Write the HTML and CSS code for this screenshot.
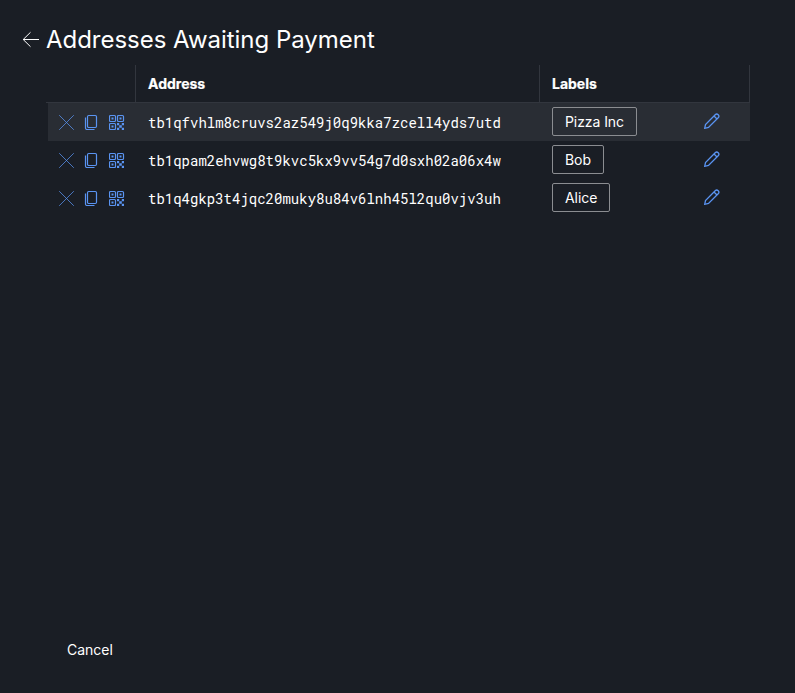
FILE: index.html
```html
<!DOCTYPE html>
<html lang="en"><head><meta charset="utf-8"><title>Addresses Awaiting Payment</title><link rel="stylesheet" href="styles.css"></head>
<body>
<svg class="defs" width="0" height="0">
<symbol id="x" viewBox="0 0 16 16"><path d="M.2 1.200l14.600 14.600M14.800 1.200L.2 15.800"/></symbol>
<symbol id="copy" viewBox="0 0 16 16"><rect x="3.500" y="1.500" width="9" height="12" rx="1.200"/><path d="M1.500 3.500v10.500a1.500 1.500 0 0 0 1.500 1.500h7.500"/></symbol>
<symbol id="qr" viewBox="0 0 16 16"><rect x=".5" y="1.500" width="6" height="6" rx="1"/><rect x="8.500" y="1.500" width="6" height="6" rx="1"/><rect x=".5" y="9.500" width="6" height="6" rx="1"/><path class="fill" d="M2.500 3.500h2v2h-2zM10.500 3.500h2v2h-2zM2.500 11.500h2v2h-2zM8 9h2.200v2.200H8zM12.800 9H15v2.200h-2.200zM10.200 11.200h2.600v2.600h-2.600zM8 13.800h2.200V16H8zM12.800 13.800H15V16h-2.200z"/></symbol>
<symbol id="pen" viewBox="0 0 16 16"><path d="M.7 15.300l.8-3.800L11.200 1.800a2 2 0 0 1 3 3L4.500 14.500zM10 3l3 3"/></symbol>
</svg>
<header class="title"><svg class="back" viewBox="0 0 18 18"><path d="M17 8.500H1.200M8.500 1.300L1.200 8.500l7.300 7.200"/></svg><h1>Addresses Awaiting Payment</h1></header>
<main class="table">
<div class="row head"><div class="cell"></div><div class="cell">Address</div><div class="cell">Labels</div></div>
<div class="row selected"><div class="actions"><svg class="thin"><use href="#x"/></svg><svg><use href="#copy"/></svg><svg><use href="#qr"/></svg></div><div class="address">tb1qfvhlm8cruvs2az549j0q9kka7zcell4yds7utd</div><div class="labels"><span class="tag">Pizza Inc</span><svg class="edit"><use href="#pen"/></svg></div></div>
<div class="row"><div class="actions"><svg class="thin"><use href="#x"/></svg><svg><use href="#copy"/></svg><svg><use href="#qr"/></svg></div><div class="address">tb1qpam2ehvwg8t9kvc5kx9vv54g7d0sxh02a06x4w</div><div class="labels"><span class="tag">Bob</span><svg class="edit"><use href="#pen"/></svg></div></div>
<div class="row"><div class="actions"><svg class="thin"><use href="#x"/></svg><svg><use href="#copy"/></svg><svg><use href="#qr"/></svg></div><div class="address">tb1q4gkp3t4jqc20muky8u84v6lnh45l2qu0vjv3uh</div><div class="labels"><span class="tag">Alice</span><svg class="edit"><use href="#pen"/></svg></div></div>
</main>
<footer><button class="cancel">Cancel</button></footer>
</body></html>
```

FILE: styles.css
```css
*{box-sizing:border-box}
body{margin:0;height:693px;background:#1a1e25;color:#fff;font:14px Inter,sans-serif;display:flex;flex-direction:column}
.defs{display:none}
svg{width:16px;height:16px;fill:none;stroke:#5a94f2;stroke-width:1.2}
.fill{fill:#5a94f2;stroke:none}
.thin{stroke-width:.75}
.edit{stroke-width:1.3}
.title{display:flex;align-items:center;height:65px;padding:14px 0 0 22px;gap:6px}
.title .back{width:18px;height:18px;stroke:#fff;stroke-width:1}
h1{margin:0;font-size:24px;font-weight:400;letter-spacing:-.03px}
.table{width:702px;margin-left:48px}
.row{display:grid;grid-template-columns:88px 404px 210px;height:38px;align-items:center}
.head{grid-template-columns:90px 404px 210px;margin-left:-2px;font-weight:700;border-bottom:1px solid #32363e}
.head .cell{height:100%;border-right:1px solid #32363e;padding-left:12px;line-height:37px;-webkit-text-stroke:.2px #fff}
.selected{background:#292d34}
.actions{display:flex;gap:9px;padding-left:11px}
.address{font:450 14px "Roboto Mono","DejaVu Sans Mono",monospace;padding-left:12px}
.labels{display:flex;justify-content:space-between;align-items:center;height:36px;margin-bottom:2px;padding:0 30px 0 12px}
.tag{border:1px solid #8b8d91;border-radius:2px;padding:0 12px;height:29px;line-height:27px;letter-spacing:-.07px}
footer{margin-top:auto;height:60px;padding-left:67px}
.cancel{border:0;padding:8px 0;background:none;color:#fff;font:14px Inter,sans-serif}
```
